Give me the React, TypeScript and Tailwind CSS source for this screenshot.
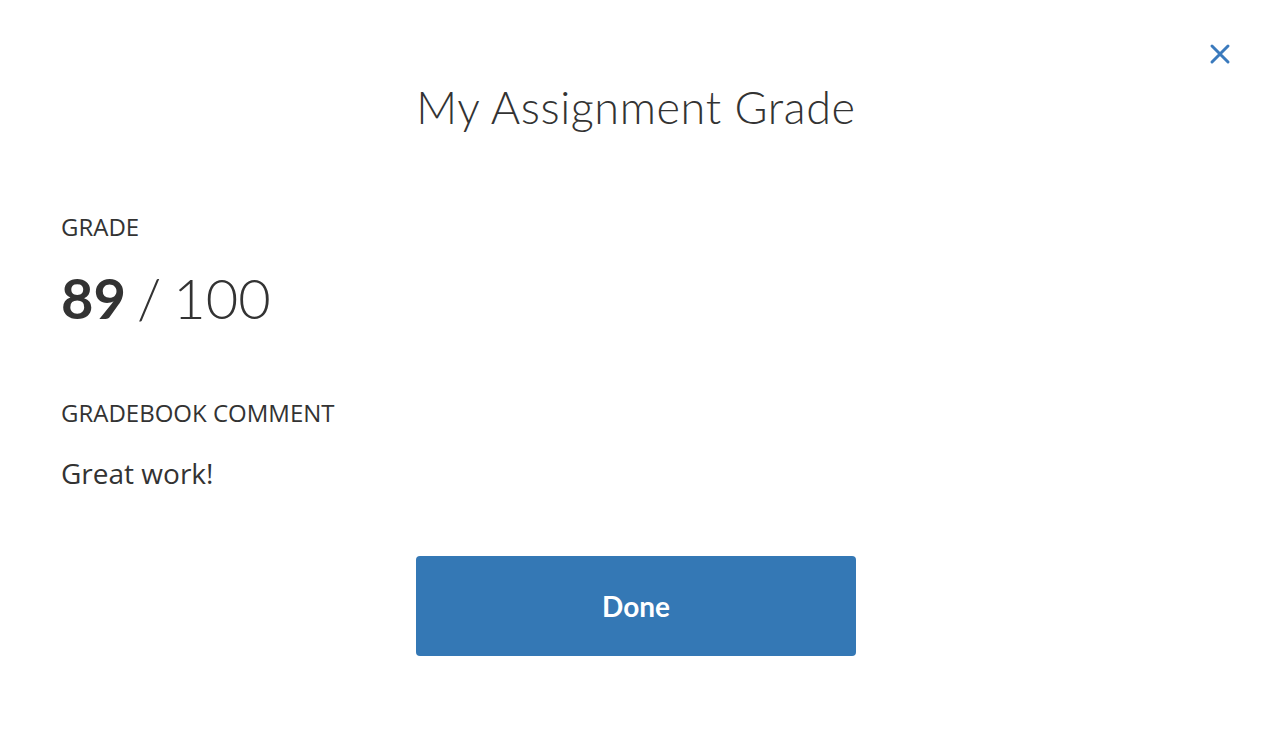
export default function App() {
  return (
    <div className="flex h-[756px] w-full flex-col bg-white text-[#333333]" style={{ fontFamily: '"Open Sans", sans-serif' }}>
      <div className="flex justify-end pr-[40px] pt-[42px]">
        <button aria-label="Close" className="flex h-6 w-6 items-center justify-center text-[#3a7abd]">
          <svg width="22" height="22" viewBox="0 0 22 22" fill="none" stroke="currentColor" strokeWidth="3" strokeLinecap="round">
            <path d="M3 3L19 19M19 3L3 19" />
          </svg>
        </button>
      </div>

      <h1 className="mt-[19px] text-center font-['Lato',sans-serif] text-[45px] font-light leading-none tracking-[0.6px]">
        My Assignment Grade
      </h1>

      <div className="px-[61px] pt-[85px]">
        <p className="text-[24px] leading-none">GRADE</p>
        <p className="mt-[31px] flex items-baseline font-['Lato',sans-serif] text-[56px] leading-none">
          <span className="font-bold">89</span>
          <span className="ml-[11px] font-light">/</span>
          <span className="ml-[12px] font-light">100</span>
        </p>

        <p className="mt-[75px] text-[24px] leading-none">GRADEBOOK COMMENT</p>
        <p className="mt-[34px] text-[28px] leading-none">Great work!</p>
      </div>

      <div className="mt-[69px] flex justify-center">
        <button className="h-[100px] w-[440px] rounded-[4px] bg-[#3478b5] font-['Lato',sans-serif] text-[28px] font-bold text-white">
          Done
        </button>
      </div>
    </div>
  );
}
